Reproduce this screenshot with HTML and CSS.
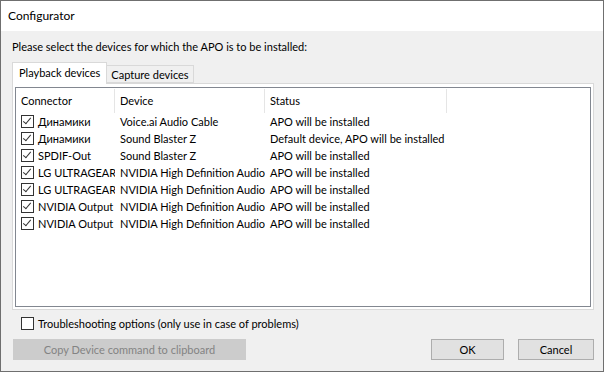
FILE: index.html
```html
<!DOCTYPE html>
<html lang="en">
<head>
    <meta charset="UTF-8">
    <title>Configurator</title>
    <link rel="stylesheet" href="styles.css">
</head>
<body>
    <div class="window">
        <div class="titlebar">Configurator</div>

        <div class="client">
            <div class="intro">Please select the devices for which the APO is to be installed:</div>

            <div class="tabs">
                <div class="tab active">Playback devices</div>
                <div class="tab">Capture devices</div>
            </div>

            <div class="panel">
                <div class="listview">
                    <div class="list-header">
                        <div class="col">Connector</div>
                        <div class="col">Device</div>
                        <div class="col">Status</div>
                        <div class="col"></div>
                    </div>

                    <div class="list-row">
                        <div class="cell first"><span class="check on"></span>Динамики</div>
                        <div class="cell">Voice.ai Audio Cable</div>
                        <div class="cell">APO will be installed</div>
                    </div>
                    <div class="list-row">
                        <div class="cell first"><span class="check on"></span>Динамики</div>
                        <div class="cell">Sound Blaster Z</div>
                        <div class="cell">Default device, APO will be installed</div>
                    </div>
                    <div class="list-row">
                        <div class="cell first"><span class="check on"></span>SPDIF-Out</div>
                        <div class="cell">Sound Blaster Z</div>
                        <div class="cell">APO will be installed</div>
                    </div>
                    <div class="list-row">
                        <div class="cell first"><span class="check on"></span>LG ULTRAGEAR</div>
                        <div class="cell">NVIDIA High Definition Audio</div>
                        <div class="cell">APO will be installed</div>
                    </div>
                    <div class="list-row">
                        <div class="cell first"><span class="check on"></span>LG ULTRAGEAR</div>
                        <div class="cell">NVIDIA High Definition Audio</div>
                        <div class="cell">APO will be installed</div>
                    </div>
                    <div class="list-row">
                        <div class="cell first"><span class="check on"></span>NVIDIA Output</div>
                        <div class="cell">NVIDIA High Definition Audio</div>
                        <div class="cell">APO will be installed</div>
                    </div>
                    <div class="list-row">
                        <div class="cell first"><span class="check on"></span>NVIDIA Output</div>
                        <div class="cell">NVIDIA High Definition Audio</div>
                        <div class="cell">APO will be installed</div>
                    </div>
                </div>
            </div>

            <label class="options">
                <span class="check"></span>Troubleshooting options (only use in case of problems)
            </label>

            <div class="footer">
                <button class="btn copy" disabled>Copy Device command to clipboard</button>
                <div class="footer-right">
                    <button class="btn ok">OK</button>
                    <button class="btn cancel">Cancel</button>
                </div>
            </div>
        </div>
    </div>
</body>
</html>
```

FILE: styles.css
```css
body {
    margin: 0;
    padding: 0;
    font-family: Lato, "Liberation Sans", sans-serif;
    font-size: 11px;
    color: #000;
    background-color: #f0f0f0;
}

.window {
    width: 604px;
    height: 372px;
    box-sizing: border-box;
    border: 1px solid #6f6f6f;
    display: flex;
    flex-direction: column;
    background-color: #f0f0f0;
    overflow: hidden;
}

.titlebar {
    height: 30px;
    line-height: 30px;
    background-color: #fff;
    padding-left: 7px;
    font-size: 12px;
}

.client {
    flex: 1;
    padding: 0 9px 0 11px;
}

.intro {
    margin-top: 8px;
    line-height: 16px;
}

/* tab strip */
.tabs {
    display: flex;
    align-items: flex-start;
    margin-top: 7px;
    height: 21px;
}

.tab {
    box-sizing: border-box;
    height: 18px;
    margin-top: 3px;
    padding: 0 4px;
    line-height: 17px;
    border: 1px solid #d9d9d9;
    border-left: none;
    background-color: #f0f0f0;
}

.tab.active {
    height: 22px;
    margin-top: 0;
    padding: 0 6px;
    line-height: 20px;
    border-left: 1px solid #d9d9d9;
    border-bottom: none;
    background-color: #fff;
    position: relative;
    z-index: 1;
}

.panel {
    box-sizing: border-box;
    width: 582px;
    height: 227px;
    border: 1px solid #d9d9d9;
    background-color: #fff;
    padding: 3px 2px 2px 2px;
}

/* list view */
.listview {
    box-sizing: border-box;
    height: 220px;
    border: 1px solid #828790;
    background-color: #fff;
}

.list-header,
.list-row {
    display: grid;
    grid-template-columns: 99px 150px 182px 1fr;
}

.list-header {
    height: 24px;
    margin-top: 1px;
}

.list-header .col {
    border-right: 1px solid #e5e5e5;
    padding-left: 5px;
    line-height: 24px;
}

.list-header .col:last-child {
    border-right: none;
}

.list-row {
    height: 17px;
    line-height: 17px;
}

.cell {
    padding-left: 5px;
    white-space: nowrap;
    overflow: hidden;
}

.cell.first {
    display: flex;
    align-items: center;
    gap: 4px;
}

/* checkboxes */
.check {
    display: inline-block;
    flex: none;
    box-sizing: border-box;
    width: 13px;
    height: 13px;
    border: 1px solid #333;
    background-color: #fff;
    position: relative;
}

.check.on::after {
    content: "";
    position: absolute;
    left: 3px;
    top: 0px;
    width: 3px;
    height: 7px;
    border-right: 1px solid #333;
    border-bottom: 1px solid #333;
    transform: rotate(40deg);
}

.options {
    display: flex;
    align-items: center;
    gap: 4px;
    margin: 7px 0 0 9px;
    height: 13px;
}

/* buttons */
.footer {
    display: flex;
    justify-content: space-between;
    margin-top: 9px;
}

.footer-right {
    display: flex;
    gap: 14px;
}

.btn {
    box-sizing: border-box;
    height: 21px;
    font-family: inherit;
    font-size: 11px;
    color: #000;
    background-color: #e1e1e1;
    border: 1px solid #adadad;
    padding: 0;
}

.btn.copy {
    width: 233px;
    margin-left: 1px;
    background-color: #cccccc;
    border-color: #cccccc;
    color: #838383;
}

.btn.ok {
    width: 73px;
}

.btn.cancel {
    width: 76px;
}
```
